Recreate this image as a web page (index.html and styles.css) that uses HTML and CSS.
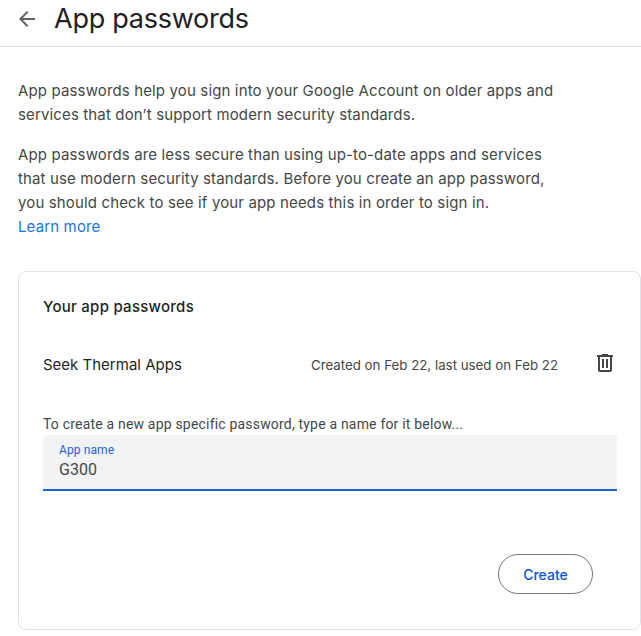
FILE: index.html
```html
<!DOCTYPE html>
<html lang="en">
<head>
  <meta charset="UTF-8" />
  <title>App passwords</title>
  <link rel="stylesheet" href="styles.css">
</head>

<body>
  <header class="page-header">
    <a class="back" href="#" aria-label="Back">
      <svg width="24" height="24" viewBox="0 0 24 24"><path d="M20 11H7.8l5.6-5.6L12 4l-8 8 8 8 1.4-1.4L7.8 13H20z"/></svg>
    </a>
    <h1>App passwords</h1>
  </header>

  <main>
    <div class="intro">
      <p>App passwords help you sign into your Google Account on older apps and<br>
        services that don’t support modern security standards.</p>
      <p>App passwords are less secure than using up-to-date apps and services<br>
        that use modern security standards. Before you create an app password,<br>
        you should check to see if your app needs this in order to sign in.<br>
        <a href="#">Learn more</a></p>
    </div>

    <section class="card">
      <h2>Your app passwords</h2>
      <div class="password-row">
        <span class="app">Seek Thermal Apps</span>
        <span class="dates">Created on Feb 22, last used on Feb 22</span>
        <button class="delete" aria-label="Remove">
          <svg width="24" height="24" viewBox="0 0 24 24"><path d="M15 4V3H9v1H4v2h1v13c0 1.1.9 2 2 2h10c1.1 0 2-.9 2-2V6h1V4h-5zm2 15H7V6h10v13zM9 8h2v9H9zm4 0h2v9h-2z"/></svg>
        </button>
      </div>
      <div class="hint">To create a new app specific password, type a name for it below...</div>
      <div class="field">
        <label for="appName">App name</label>
        <input type="text" id="appName" value="G300">
      </div>
      <div class="actions">
        <button class="create">Create</button>
      </div>
    </section>
  </main>
</body>
</html>
```
FILE: styles.css
```css
body {
  margin: 0;
  font-family: Inter, sans-serif;
  font-size: 15px;
  color: #444746;
  background: #fff;
  overflow: hidden;
}

h1, h2, p {
  margin: 0;
}

a {
  color: #1a73e8;
  text-decoration: none;
}

button {
  padding: 0;
  background: none;
  border: 0;
  font-family: inherit;
  cursor: pointer;
}

svg {
  display: block;
  fill: #444746;
}

.page-header {
  display: flex;
  align-items: center;
  box-sizing: border-box;
  height: 47px;
  padding: 0 0 9px 15px;
  border-bottom: 1px solid #dadce0;
}

.back svg {
  fill: #5f6368;
}

h1 {
  margin-left: 15px;
  font-size: 27px;
  font-weight: 400;
  line-height: 36px;
  letter-spacing: -0.25px;
  color: #202124;
}

main {
  padding: 32px 0 0 18px;
}

.intro {
  line-height: 24px;
  letter-spacing: 0.14px;
  white-space: nowrap;
}

.intro p + p {
  margin-top: 16px;
}

.card {
  box-sizing: border-box;
  height: 359px;
  margin-top: 32px;
  padding: 24px 23px 0 24px;
  border: 1px solid #e0e2e5;
  border-radius: 8px;
}

h2 {
  font-size: 15px;
  font-weight: 500;
  line-height: 22px;
  letter-spacing: 0.26px;
  color: #1f1f1f;
}

.password-row {
  display: flex;
  align-items: center;
  height: 48px;
  margin-top: 22px;
}

.app {
  color: #1f1f1f;
}

.dates {
  margin-left: auto;
  padding-top: 2px;
  font-size: 13.3px;
}

.delete {
  margin: 0 0 3px 35px;
}

.hint {
  margin-top: 26px;
  font: 14px/20px Roboto, sans-serif;
  letter-spacing: 0.19px;
}

.field {
  box-sizing: border-box;
  height: 56px;
  margin-top: 1px;
  padding: 7px 16px 0;
  background: #f1f3f4;
  border-bottom: 2px solid #1967d2;
  border-radius: 4px 4px 0 0;
  font-family: Roboto, sans-serif;
}

.field label {
  display: block;
  font-size: 12px;
  line-height: 16px;
  letter-spacing: 0.1px;
  color: #1967d2;
}

.field input {
  display: block;
  width: 100%;
  height: 22px;
  padding: 0;
  background: none;
  border: 0;
  outline: 0;
  font: 16px Roboto, sans-serif;
  color: #444746;
}

.actions {
  display: flex;
  justify-content: flex-end;
  margin: 63px 24px 0 0;
}

.create {
  box-sizing: border-box;
  width: 95px;
  height: 40px;
  border: 1px solid #747775;
  border-radius: 20px;
  font-size: 14px;
  font-weight: 500;
  color: #0b57d0;
}
```
